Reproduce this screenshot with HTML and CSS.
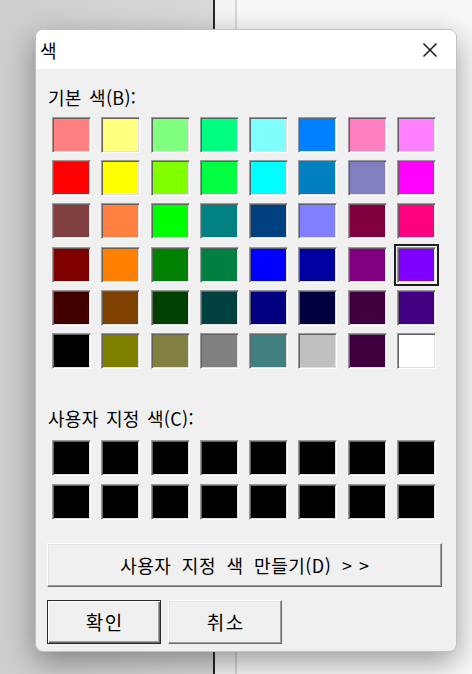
FILE: index.html
```html
<!DOCTYPE html>
<html lang="ko">
<head>
<meta charset="utf-8">
<title>색</title>
<link rel="stylesheet" href="styles.css">
</head>
<body>
<div class="dialog">
  <div class="titlebar">
    <span class="title">색</span>
    <svg class="close" width="16" height="16" viewBox="0 0 16 16"><path d="M1.5 1.5 L14.5 14.5 M14.5 1.5 L1.5 14.5" stroke="#1a1a1a" stroke-width="1.5" fill="none"/></svg>
  </div>
  <div class="content">
    <div class="label first">기본 색(B):</div>
    <div class="grid basic">
      <div class="sw" style="--c:#ff8080"></div><div class="sw" style="--c:#ffff80"></div><div class="sw" style="--c:#80ff80"></div><div class="sw" style="--c:#00ff80"></div><div class="sw" style="--c:#80ffff"></div><div class="sw" style="--c:#0080ff"></div><div class="sw" style="--c:#ff80c0"></div><div class="sw" style="--c:#ff80ff"></div>
      <div class="sw" style="--c:#ff0000"></div><div class="sw" style="--c:#ffff00"></div><div class="sw" style="--c:#80ff00"></div><div class="sw" style="--c:#00ff40"></div><div class="sw" style="--c:#00ffff"></div><div class="sw" style="--c:#0080c0"></div><div class="sw" style="--c:#8080c0"></div><div class="sw" style="--c:#ff00ff"></div>
      <div class="sw" style="--c:#804040"></div><div class="sw" style="--c:#ff8040"></div><div class="sw" style="--c:#00ff00"></div><div class="sw" style="--c:#008080"></div><div class="sw" style="--c:#004080"></div><div class="sw" style="--c:#8080ff"></div><div class="sw" style="--c:#800040"></div><div class="sw" style="--c:#ff0080"></div>
      <div class="sw" style="--c:#800000"></div><div class="sw" style="--c:#ff8000"></div><div class="sw" style="--c:#008000"></div><div class="sw" style="--c:#008040"></div><div class="sw" style="--c:#0000ff"></div><div class="sw" style="--c:#0000a0"></div><div class="sw" style="--c:#800080"></div><div class="sw selected" style="--c:#8000ff"></div>
      <div class="sw" style="--c:#400000"></div><div class="sw" style="--c:#804000"></div><div class="sw" style="--c:#004000"></div><div class="sw" style="--c:#004040"></div><div class="sw" style="--c:#000080"></div><div class="sw" style="--c:#000040"></div><div class="sw" style="--c:#400040"></div><div class="sw" style="--c:#400080"></div>
      <div class="sw" style="--c:#000000"></div><div class="sw" style="--c:#808000"></div><div class="sw" style="--c:#808040"></div><div class="sw" style="--c:#808080"></div><div class="sw" style="--c:#408080"></div><div class="sw" style="--c:#c0c0c0"></div><div class="sw" style="--c:#400040"></div><div class="sw" style="--c:#ffffff"></div>
    </div>
    <div class="label second">사용자 지정 색(C):</div>
    <div class="grid custom">
      <div class="sw"></div><div class="sw"></div><div class="sw"></div><div class="sw"></div><div class="sw"></div><div class="sw"></div><div class="sw"></div><div class="sw"></div>
      <div class="sw"></div><div class="sw"></div><div class="sw"></div><div class="sw"></div><div class="sw"></div><div class="sw"></div><div class="sw"></div><div class="sw"></div>
    </div>
    <button class="btn wide">사용자 지정 색 만들기(D) <span class="arrows">&gt;&gt;</span></button>
    <div class="actions">
      <button class="btn small default">확인</button>
      <button class="btn small">취소</button>
    </div>
  </div>
</div>
</body>
</html>
```
FILE: styles.css
```css
html, body {
  margin: 0;
  padding: 0;
}
body {
  width: 472px;
  height: 674px;
  overflow: hidden;
  font-family: "Noto Sans CJK KR", "Noto Sans", sans-serif;
  background: linear-gradient(to right,
    #cdcdcd 0px, #d9d9d9 213px,
    #262626 213px, #262626 215px,
    #f3f3f3 215px, #f3f3f3 235px,
    #d6d6d6 235px, #d6d6d6 237px,
    #f8f8f8 237px, #f8f8f8 472px);
  padding-top: 29px;
  box-sizing: border-box;
}
.dialog {
  margin-left: 35px;
  width: 422px;
  height: 623px;
  box-sizing: border-box;
  border: 1px solid #c2c2c2;
  border-radius: 8px;
  overflow: hidden;
  background: #f0f0f0;
  box-shadow: 0 10px 30px rgba(0, 0, 0, 0.38);
  display: flex;
  flex-direction: column;
}
.titlebar {
  height: 39px;
  background: #ffffff;
  display: flex;
  align-items: center;
  justify-content: space-between;
  padding: 0 18px 0 4px;
  flex-shrink: 0;
}
.title {
  font-size: 18px;
  line-height: 22px;
  color: #000;
}
.close {
  display: block;
}
.content {
  display: flex;
  flex-direction: column;
  padding: 0 15px 0 11px;
}
.label {
  font-size: 18px;
  line-height: 22px;
  color: #000;
  padding-left: 1px;
  letter-spacing: 0.3px;
  word-spacing: 2px;
}
.label.first {
  margin-top: 17px;
}
.grid {
  display: grid;
  grid-template-columns: repeat(8, 39px);
  column-gap: 10.3px;
  margin-left: 5px;
}
.basic {
  margin-top: 9px;
  grid-auto-rows: 36px;
  row-gap: 7.2px;
}
.label.second {
  margin-top: 38px;
}
.custom {
  margin-top: 11px;
  grid-auto-rows: 36px;
  row-gap: 8px;
}
.sw {
  box-sizing: border-box;
  background: var(--c, #000);
  border: 1px solid;
  border-color: #9a9a9a #ffffff #ffffff #9a9a9a;
  box-shadow: inset 1px 1px #626262, inset -1px -1px #e0e0e0;
}
.sw.selected {
  outline: 2px solid #1e1e1e;
  outline-offset: 1px;
}
.btn {
  box-sizing: border-box;
  background: #f0f0f0;
  font-family: "Noto Sans CJK KR", "Noto Sans", sans-serif;
  font-size: 18px;
  line-height: 22px;
  color: #000;
  border: 1px solid;
  border-color: #ffffff #696969 #696969 #ffffff;
  box-shadow: inset -1px -1px #a0a0a0, inset 1px 1px #e3e3e3;
  padding: 0;
  margin: 0;
}
.wide {
  margin-top: 23px;
  height: 44px;
  width: 395px;
  letter-spacing: 0.5px;
  word-spacing: 5px;
}
.arrows {
  letter-spacing: 7px;
  margin-right: -7px;
}
.actions {
  display: flex;
  gap: 7px;
  margin-top: 13px;
}
.small {
  width: 114px;
  height: 44px;
  font-size: 19px;
  letter-spacing: 1.5px;
  text-indent: 1.5px;
}
.default {
  border-color: #2a2a2a;
  box-shadow: inset 1px 1px #ffffff, inset -1px -1px #696969, inset -2px -2px #a0a0a0;
}
```
